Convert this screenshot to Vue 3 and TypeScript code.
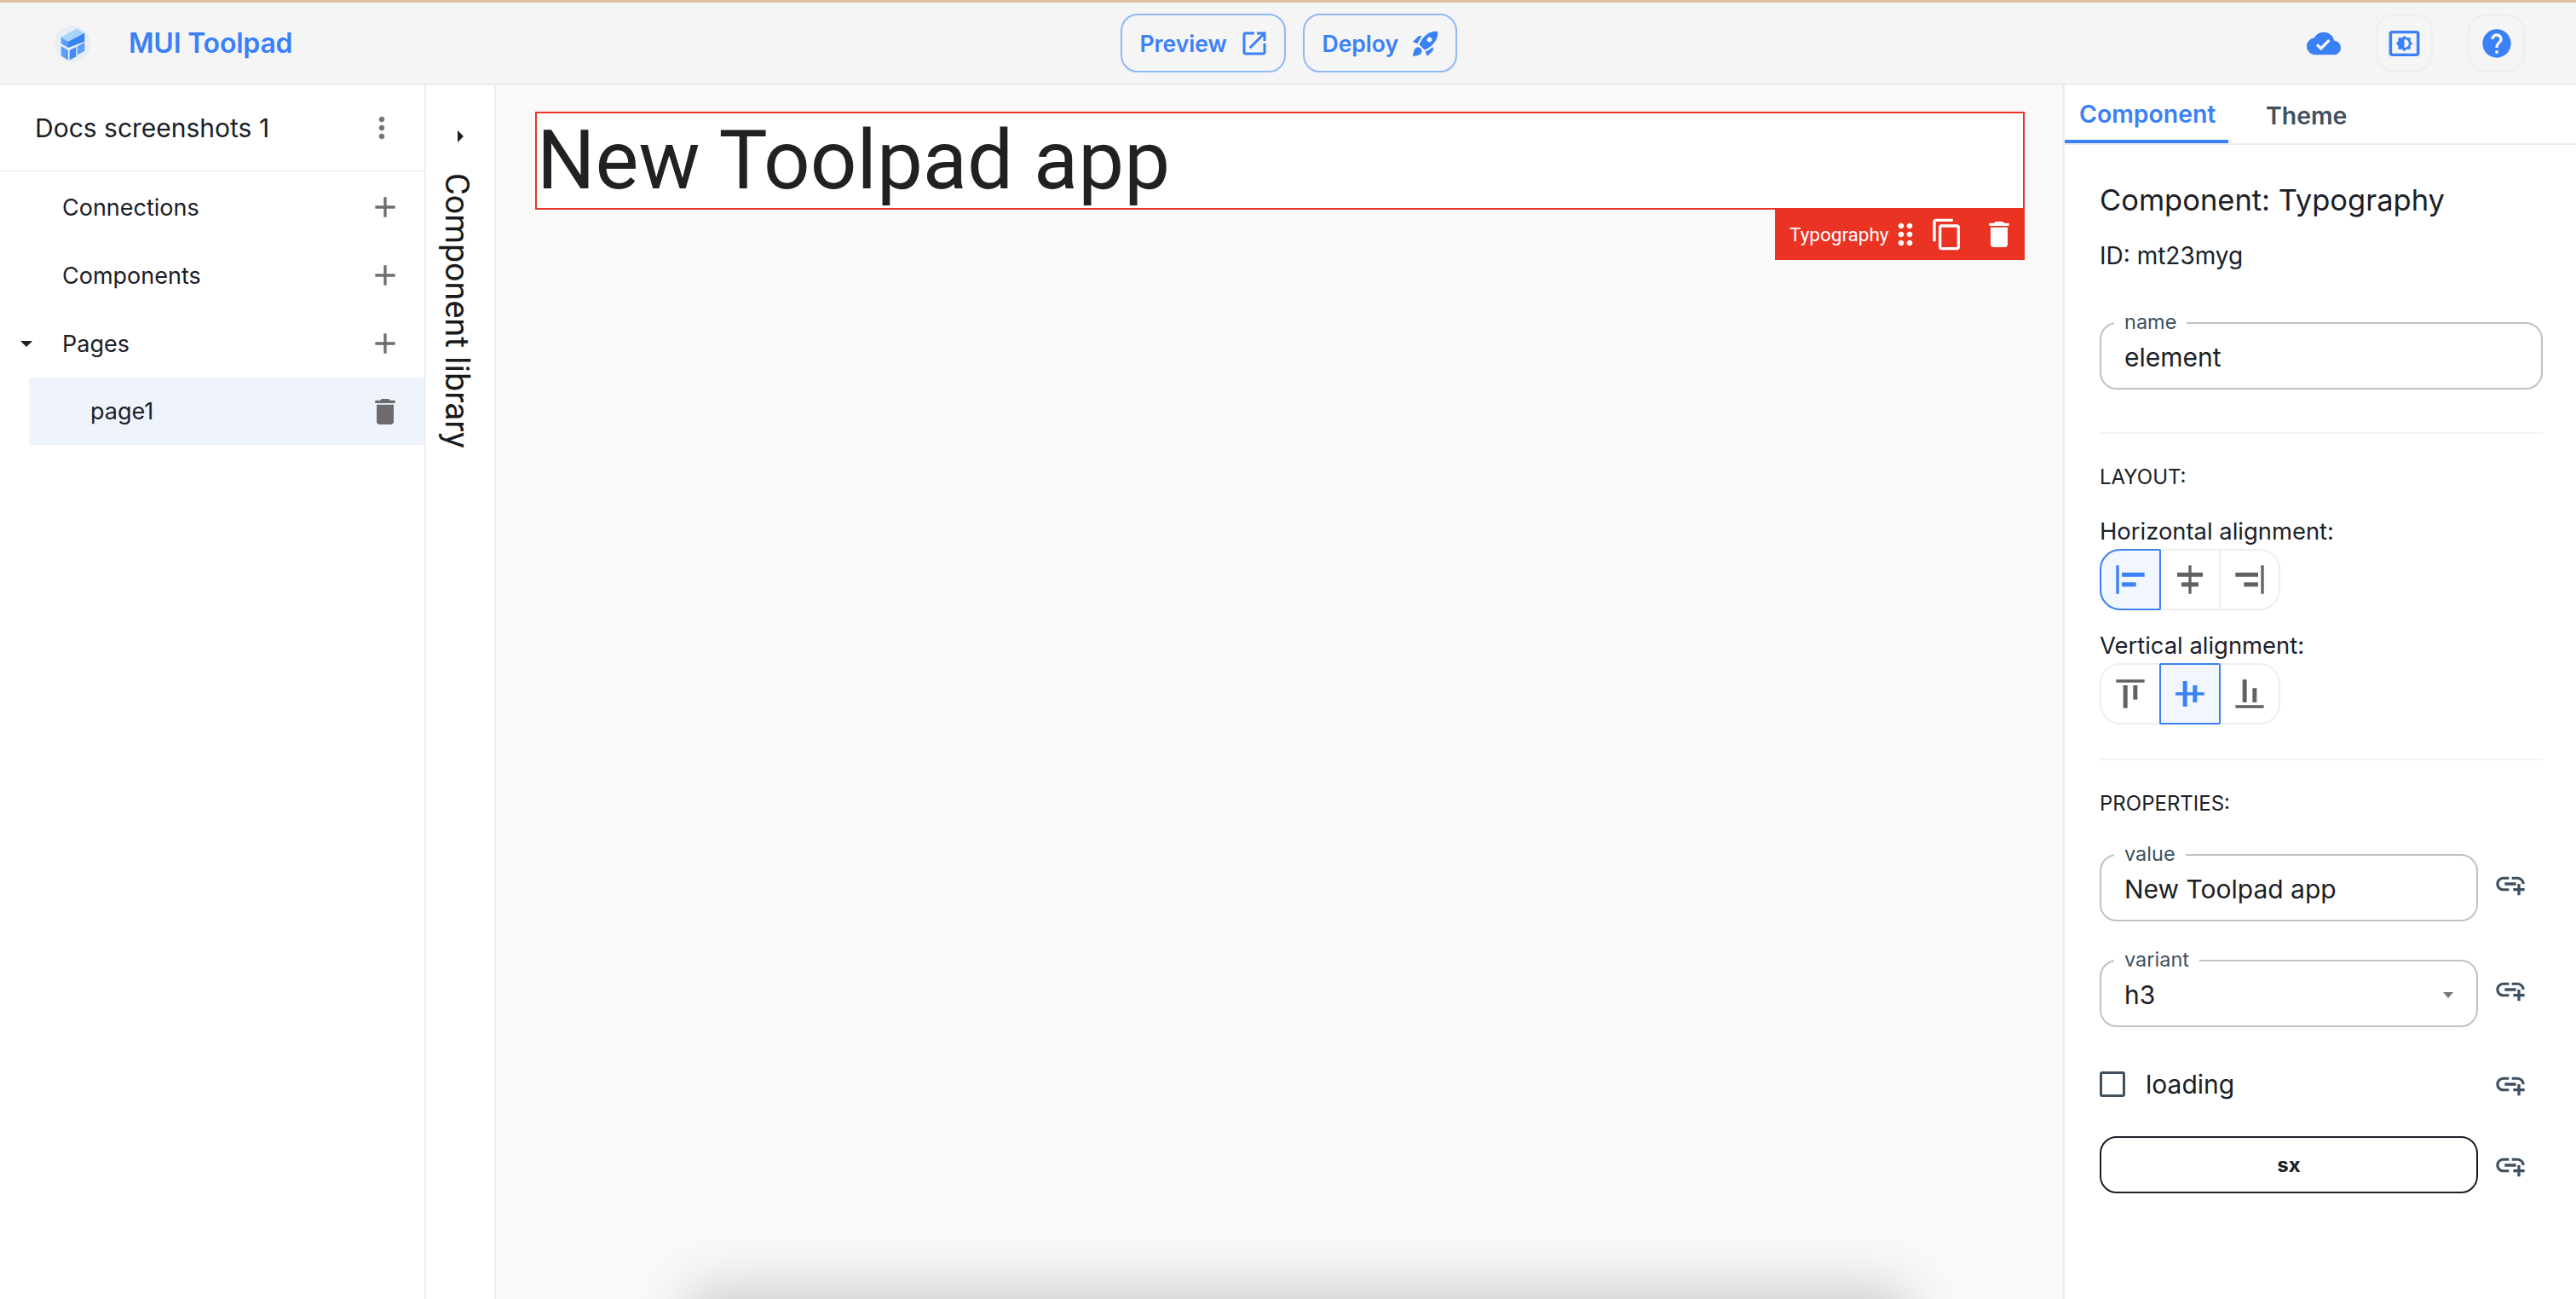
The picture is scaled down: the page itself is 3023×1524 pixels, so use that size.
<script setup lang="ts">
const P = {
  add: 'M19 13h-6v6h-2v-6H5v-2h6V5h2v6h6v2z',
  more: 'M12 8c1.1 0 2-.9 2-2s-.9-2-2-2-2 .9-2 2 .9 2 2 2zm0 2c-1.1 0-2 .9-2 2s.9 2 2 2 2-.9 2-2-.9-2-2-2zm0 6c-1.1 0-2 .9-2 2s.9 2 2 2 2-.9 2-2-.9-2-2-2z',
  del: 'M6 19c0 1.1.9 2 2 2h8c1.1 0 2-.9 2-2V7H6v12zM19 4h-3.5l-1-1h-5l-1 1H5v2h14V4z',
  open: 'M19 19H5V5h7V3H5c-1.11 0-2 .9-2 2v14c0 1.1.89 2 2 2h14c1.1 0 2-.9 2-2v-7h-2v7zM14 3v2h3.59l-9.83 9.83 1.41 1.41L19 6.41V10h2V3h-7z',
  rocket: 'M9.19 6.35c-2.04 2.29-3.44 5.58-3.57 5.89L2 10.69l4.05-4.05c.47-.47 1.15-.68 1.81-.55l1.33.26zM11.17 17s3.74-1.55 5.89-3.7c5.4-5.4 4.5-9.62 4.21-10.57-.95-.3-5.17-1.19-10.57 4.21C8.55 9.09 7 12.83 7 12.83L11.17 17zm6.48-2.19c-2.29 2.04-5.58 3.44-5.89 3.57L13.31 22l4.05-4.05c.47-.47.68-1.15.55-1.81l-.26-1.33zM9 18c0 .83-.34 1.58-.88 2.12C6.94 21.3 2 22 2 22s.7-4.94 1.88-6.12C4.42 15.34 5.17 15 6 15c1.66 0 3 1.34 3 3zm4-9c0-1.1.9-2 2-2s2 .9 2 2-.9 2-2 2-2-.9-2-2z',
  cloud: 'M19.35 10.04C18.67 6.59 15.64 4 12 4 9.11 4 6.6 5.64 5.35 8.04 2.34 8.36 0 10.91 0 14c0 3.31 2.69 6 6 6h13c2.76 0 5-2.24 5-5 0-2.64-2.05-4.78-4.65-4.96zM10 17l-3.5-3.5 1.41-1.41L10 14.17 15.18 9l1.41 1.41L10 17z',
  bright: 'M20 3H4c-1.11 0-2 .89-2 2v14c0 1.11.89 2 2 2h16c1.11 0 2-.89 2-2V5c0-1.11-.89-2-2-2zm0 16.02H4V4.98h16v14.04zM8 16h2.5l1.5 1.5 1.5-1.5H16v-2.5l1.5-1.5-1.5-1.5V8h-2.5L12 6.5 10.5 8H8v2.5L6.5 12 8 13.5V16zm4-7c1.66 0 3 1.34 3 3s-1.34 3-3 3V9z',
  help: 'M12 2C6.48 2 2 6.48 2 12s4.48 10 10 10 10-4.48 10-10S17.52 2 12 2zm1 17h-2v-2h2v2zm2.07-7.75l-.9.92C13.45 12.9 13 13.5 13 15h-2v-.5c0-1.1.45-2.1 1.17-2.83l1.24-1.26c.37-.36.59-.86.59-1.41 0-1.1-.9-2-2-2s-2 .9-2 2H8c0-2.21 1.79-4 4-4s4 1.79 4 4c0 .88-.36 1.68-.93 2.25z',
  copy: 'M16 1H4c-1.1 0-2 .9-2 2v14h2V3h12V1zm3 4H8c-1.1 0-2 .9-2 2v14c0 1.1.9 2 2 2h11c1.1 0 2-.9 2-2V7c0-1.1-.9-2-2-2zm0 16H8V7h11v14z',
  drag: 'M11 18c0 1.1-.9 2-2 2s-2-.9-2-2 .9-2 2-2 2 .9 2 2zm-2-8c-1.1 0-2 .9-2 2s.9 2 2 2 2-.9 2-2-.9-2-2-2zm0-6c-1.1 0-2 .9-2 2s.9 2 2 2 2-.9 2-2-.9-2-2-2zm6 4c1.1 0 2-.9 2-2s-.9-2-2-2-2 .9-2 2 .9 2 2 2zm0 2c-1.1 0-2 .9-2 2s.9 2 2 2 2-.9 2-2-.9-2-2-2zm0 6c-1.1 0-2 .9-2 2s.9 2 2 2 2-.9 2-2-.9-2-2-2z',
  link: 'M8 11h8v2H8zm12.1 1H22c0-2.76-2.24-5-5-5h-4v1.9h4c1.71 0 3.1 1.39 3.1 3.1zM3.9 12c0-1.71 1.39-3.1 3.1-3.1h4V7H7c-2.76 0-5 2.24-5 5s2.24 5 5 5h4v-1.9H7c-1.71 0-3.1-1.39-3.1-3.1zM19 12h-2v3h-3v2h3v3h2v-3h3v-2h-3z',
}

const horizontal = [
  { d: 'M4 22H2V2h2v20zM22 7H6v3h16V7zm-6 7H6v3h10v-3z', on: true },
  { d: 'M11 2h2v5h8v3h-8v4h5v3h-5v5h-2v-5H6v-3h5v-4H3V7h8V2z', on: false },
  { d: 'M20 2h2v20h-2V2zM2 10h16V7H2v3zm6 7h10v-3H8v3z', on: false },
]
const vertical = [
  { d: 'M22 2v2H2V2h20zM7 22h3V6H7v16zm7-6h3V6h-3v10z', on: false },
  { d: 'M22 11h-5V6h-3v5h-4V3H7v8H1.84v2H7v8h3v-8h4v5h3v-5h5v-2z', on: true },
  { d: 'M22 22H2v-2h20v2zM10 2H7v16h3V2zm7 6h-3v10h3V8z', on: false },
]
const explorer = ['Connections', 'Components']
</script>

<template>
  <div class="app">
    <header class="topbar">
      <div class="brand">
        <svg class="logo" viewBox="0 0 44 44">
          <circle cx="22" cy="22.5" r="21.5" fill="#e8eef5" />
          <polygon points="8.7,14.8 27,4.2 36.3,9.8 17,19.8" fill="#a9d3fb" />
          <polygon points="8.7,14.8 17,19.8 17,27 8.7,22.2" fill="#5c9ff8" />
          <polygon points="17,19.8 36.3,9.8 36.3,19.8 17,27" fill="#3a83f6" />
          <polygon points="8.7,25 17,30 17,41.5 8.7,36.5" fill="#5c9ff8" />
          <polygon points="18.7,30 26.3,26 26.3,37.5 18.7,41.5" fill="#3f88f6" />
          <polygon points="27.7,25.5 36.3,20.8 36.3,30.8 27.7,35.5" fill="#5c9ff8" />
        </svg>
        <span class="brand-name">MUI Toolpad</span>
      </div>
      <div class="actions">
        <button class="outline preview">Preview <svg class="ic36" viewBox="0 0 24 24"><path :d="P.open" /></svg></button>
        <button class="outline deploy">Deploy <svg class="ic36" viewBox="0 0 24 24"><path :d="P.rocket" /></svg></button>
      </div>
      <div class="tools">
        <svg class="ic40 blue" viewBox="0 0 24 24"><path :d="P.cloud" /></svg>
        <span class="tool"><svg class="bright blue" viewBox="0 0 24 24" preserveAspectRatio="none"><path :d="P.bright" /></svg></span>
        <span class="tool"><svg class="ic40 blue" viewBox="0 0 24 24"><path :d="P.help" /></svg></span>
      </div>
    </header>

    <div class="body">
      <aside class="explorer">
        <div class="project">
          <span>Docs screenshots 1</span>
          <svg class="ic40 more" viewBox="0 0 24 24"><path :d="P.more" /></svg>
        </div>
        <div v-for="name in explorer" :key="name" class="tree-row">
          <span>{{ name }}</span>
          <svg class="ic40" viewBox="0 0 24 24"><path :d="P.add" /></svg>
        </div>
        <div class="tree-row">
          <i class="caret-down"></i>
          <span>Pages</span>
          <svg class="ic40" viewBox="0 0 24 24"><path :d="P.add" /></svg>
        </div>
        <div class="tree-row page">
          <span>page1</span>
          <svg class="ic40" viewBox="0 0 24 24"><path :d="P.del" /></svg>
        </div>
      </aside>

      <div class="library">
        <i class="caret-right"></i>
        <span class="library-label">Component library</span>
      </div>

      <main class="canvas">
        <div class="selected">
          <h3 class="title">New Toolpad app</h3>
        </div>
        <div class="tag">
          <span class="tag-label">Typography</span>
          <svg class="ic40 drag" viewBox="0 0 24 24"><path :d="P.drag" /></svg>
          <svg class="ic40" viewBox="0 0 24 24"><path :d="P.copy" /></svg>
          <svg class="ic40" viewBox="0 0 24 24"><path :d="P.del" /></svg>
        </div>
        <div class="window-shadow"></div>
      </main>

      <aside class="inspector">
        <nav class="tabs">
          <span class="tab active">Component</span>
          <span class="tab">Theme</span>
        </nav>
        <div class="panel">
          <h4 class="heading">Component: Typography</h4>
          <p class="id">ID: mt23myg</p>

          <div class="field name">
            <label>name</label>
            <span>element</span>
          </div>
          <hr class="rule first-rule" />

          <p class="section">LAYOUT:</p>
          <p class="align-label">Horizontal alignment:</p>
          <div class="toggle">
            <span v-for="(b, i) in horizontal" :key="i" :class="['toggle-btn', { on: b.on }]">
              <svg viewBox="0 0 24 24"><path :d="b.d" /></svg>
            </span>
          </div>
          <p class="align-label second">Vertical alignment:</p>
          <div class="toggle">
            <span v-for="(b, i) in vertical" :key="i" :class="['toggle-btn', { on: b.on }]">
              <svg viewBox="0 0 24 24"><path :d="b.d" /></svg>
            </span>
          </div>
          <hr class="rule second-rule" />

          <p class="section props">PROPERTIES:</p>
          <div class="prop value">
            <div class="field"><label>value</label><span>New Toolpad app</span></div>
            <svg class="link" viewBox="0 0 24 24"><path :d="P.link" /></svg>
          </div>
          <div class="prop variant">
            <div class="field">
              <label>variant</label><span>h3</span>
              <i class="select-caret"></i>
            </div>
            <svg class="link" viewBox="0 0 24 24"><path :d="P.link" /></svg>
          </div>
          <div class="prop loading">
            <div class="check"><i class="box"></i><span>loading</span></div>
            <svg class="link" viewBox="0 0 24 24"><path :d="P.link" /></svg>
          </div>
          <div class="prop sx">
            <button class="sx-btn">sx</button>
            <svg class="link" viewBox="0 0 24 24"><path :d="P.link" /></svg>
          </div>
        </div>
      </aside>
    </div>
  </div>
</template>

<style scoped>
.app {
  width: 3023px;
  height: 1524px;
  display: flex;
  flex-direction: column;
  overflow: hidden;
  font-family: Inter, "Liberation Sans", sans-serif;
  color: #1a2027;
  background: #fff;
}
svg { display: block; flex: none; fill: currentColor; }
.ic40 { width: 40px; height: 40px; }
.ic36 { width: 36px; height: 36px; }
.blue { color: #3a80f6; }

.topbar {
  height: 100px;
  flex: none;
  box-sizing: border-box;
  border-top: 3px solid #dcbf9b;
  border-bottom: 2px solid #e9ecef;
  background: #f5f5f5;
  display: grid;
  grid-template-columns: 1fr auto 1fr;
  align-items: center;
}
.brand { display: flex; align-items: center; padding-left: 63px; }
.logo { width: 44px; height: 44px; }
.brand-name { margin-left: 44px; font-size: 32px; font-weight: 600; color: #3a80f6; letter-spacing: -0.2px; }
.actions { display: flex; gap: 20px; margin-left: 1px; }
.outline {
  height: 69px;
  box-sizing: border-box;
  display: flex;
  align-items: center;
  justify-content: space-between;
  padding: 0 17px 0 21px;
  border: 2px solid #90b8f8;
  border-radius: 20px;
  background: transparent;
  color: #3a80f6;
  font: 600 26.5px Inter, sans-serif;
}
.preview { width: 194px; }
.deploy { width: 181px; }
.tools { display: flex; align-items: center; justify-content: flex-end; padding-right: 60px; }
.tool {
  width: 67px;
  height: 67px;
  box-sizing: border-box;
  border: 2px solid #eeeeee;
  border-radius: 20px;
  display: flex;
  align-items: center;
  justify-content: center;
  margin-left: 41px;
}
.bright { width: 43px; height: 40px; }

.body { flex: 1; min-height: 0; display: flex; }

.explorer {
  width: 500px;
  flex: none;
  box-sizing: border-box;
  border-right: 2px solid #eceef1;
}
.project {
  height: 102px;
  margin-bottom: 1px;
  box-sizing: border-box;
  border-bottom: 2px solid #f2f3f5;
  display: flex;
  align-items: center;
  justify-content: space-between;
  padding: 0 30px 0 41px;
  font-size: 30px;
}
.more { color: #757575; }
.tree-row {
  position: relative;
  height: 80px;
  display: flex;
  align-items: center;
  justify-content: space-between;
  padding: 0 26px 0 73px;
  font-size: 27px;
}
.tree-row svg { color: #6e6e6e; }
.page {
  margin-left: 34px;
  height: 79px;
  padding-left: 72px;
  background: #eef3fc;
}
.page svg { color: #6b6b70; }
.caret-down {
  position: absolute;
  left: 24px;
  top: 37px;
  border-left: 7px solid transparent;
  border-right: 7px solid transparent;
  border-top: 7px solid #1a2027;
}

.library {
  width: 82px;
  flex: none;
  box-sizing: border-box;
  border-right: 2px solid #eceef1;
  display: flex;
  flex-direction: column;
  align-items: center;
  padding-top: 53px;
}
.caret-right {
  border-top: 7px solid transparent;
  border-bottom: 7px solid transparent;
  border-left: 7px solid #1a2027;
}
.library-label {
  margin-top: 36px;
  margin-right: 8px;
  writing-mode: vertical-rl;
  font: 400 39.5px Roboto, sans-serif;
  color: #1a1a1a;
}

.canvas {
  position: relative;
  flex: 1;
  min-width: 0;
  overflow: hidden;
  background: #f9f9f9;
  display: flex;
  flex-direction: column;
  align-items: flex-start;
  padding: 31px 44px 0 46px;
}
.selected {
  width: 100%;
  height: 115px;
  box-sizing: border-box;
  border: 2px solid #ea3323;
  background: #fff;
}
.title {
  margin: 0;
  font: 400 96px/111px Roboto, sans-serif;
  color: #212121;
}
.tag {
  align-self: flex-end;
  margin-top: -1px;
  width: 293px;
  height: 60px;
  box-sizing: border-box;
  background: #ea3323;
  color: #fff;
  display: flex;
  align-items: center;
  padding-left: 17px;
}
.tag-label { font: 400 22.5px Roboto, sans-serif; width: 116px; }
.tag .drag { margin-right: 9px; }
.tag svg:last-child { margin-left: 21px; }
.window-shadow {
  position: absolute;
  left: 227px;
  width: 1429px;
  top: 100%;
  height: 200px;
  box-shadow: 0 -11px 60px rgba(0, 0, 0, 0.19);
}

.inspector {
  flex: none;
  width: 603px;
  box-sizing: border-box;
  border-left: 3px solid #eceef1;
}
.tabs {
  height: 70px;
  box-sizing: border-box;
  border-bottom: 2px solid #e9ecef;
  display: flex;
}
.tab {
  box-sizing: border-box;
  height: 68px;
  padding: 2px 15px 0 44px;
  display: flex;
  align-items: center;
  font-size: 28.4px;
  font-weight: 600;
  color: #3e5060;
}
.tab.active {
  width: 192px;
  padding-left: 17px;
  color: #3a80f6;
  border-bottom: 4px solid #3a80f6;
}
.panel { padding: 41px 0 0 41px; }
.panel p, .panel h4 { margin: 0; }
.heading { font-size: 34.5px; font-weight: 400; line-height: 48px; }
.panel .id { margin-top: 21px; font-size: 28px; line-height: 40px; }
.field {
  position: relative;
  box-sizing: border-box;
  width: 444px;
  height: 79px;
  border: 2px solid #c2c2c2;
  border-radius: 20px;
  display: flex;
  align-items: center;
  padding: 2px 0 0 27px;
  font-size: 30px;
}
.field label {
  position: absolute;
  left: 15px;
  top: -14px;
  padding: 0 12px;
  background: #fff;
  font-size: 23.5px;
  line-height: 24px;
  color: #3e5060;
}
.field.name { width: 520px; margin-top: 58px; }
.rule { border: 0; height: 2px; background: #f3f4f5; width: 520px; margin: 0; }
.first-rule { margin-top: 50px; }
.second-rule { margin-top: 40px; }
.panel .section { font-size: 24px; line-height: 30px; margin-top: 36px; }
.panel .align-label { margin-top: 30px; font-size: 27.4px; line-height: 36px; }
.panel .align-label.second { margin-top: 23px; }
.toggle {
  margin-top: 3px;
  width: 212px;
  height: 72px;
  box-sizing: border-box;
  border: 2px solid #eeeeee;
  border-radius: 24px;
  display: flex;
}
.toggle-btn {
  box-sizing: border-box;
  flex: 1;
  margin: -2px 0;
  display: flex;
  align-items: center;
  justify-content: center;
  color: #616161;
}
.toggle-btn + .toggle-btn { border-left: 2px solid #eeeeee; }
.toggle-btn svg { width: 40px; height: 40px; }
.toggle-btn.on {
  background: #f2f6fe;
  color: #3a80f6;
  border: 2px solid #3a80f6;
  border-radius: 2px;
}
.toggle-btn.on:first-child { margin-left: -2px; border-radius: 24px 2px 2px 24px; }
.toggle-btn.on + .toggle-btn { border-left: 0; }
.prop { display: flex; align-items: center; }
.link { width: 40px; height: 40px; color: #3e5060; margin-left: 18px; }
.prop.value { margin-top: 44px; }
.prop.value .link, .prop.variant .link { margin-top: -10px; }
.prop.variant { margin-top: 45px; }
.select-caret {
  position: absolute;
  right: 27px;
  top: 36px;
  border-left: 6px solid transparent;
  border-right: 6px solid transparent;
  border-top: 7px solid #757575;
}
.prop.loading { margin-top: 42px; height: 50px; }
.check { width: 444px; display: flex; align-items: center; font-size: 30px; }
.box {
  width: 30px;
  height: 30px;
  box-sizing: border-box;
  border: 3px solid #3e5060;
  border-radius: 3px;
  margin-right: 24px;
}
.prop.sx { margin-top: 36px; }
.sx-btn {
  width: 444px;
  height: 67px;
  box-sizing: border-box;
  border: 2px solid #1a2027;
  border-radius: 20px;
  background: #fff;
  color: #1a2027;
  font: 700 24px Inter, sans-serif;
}
</style>
